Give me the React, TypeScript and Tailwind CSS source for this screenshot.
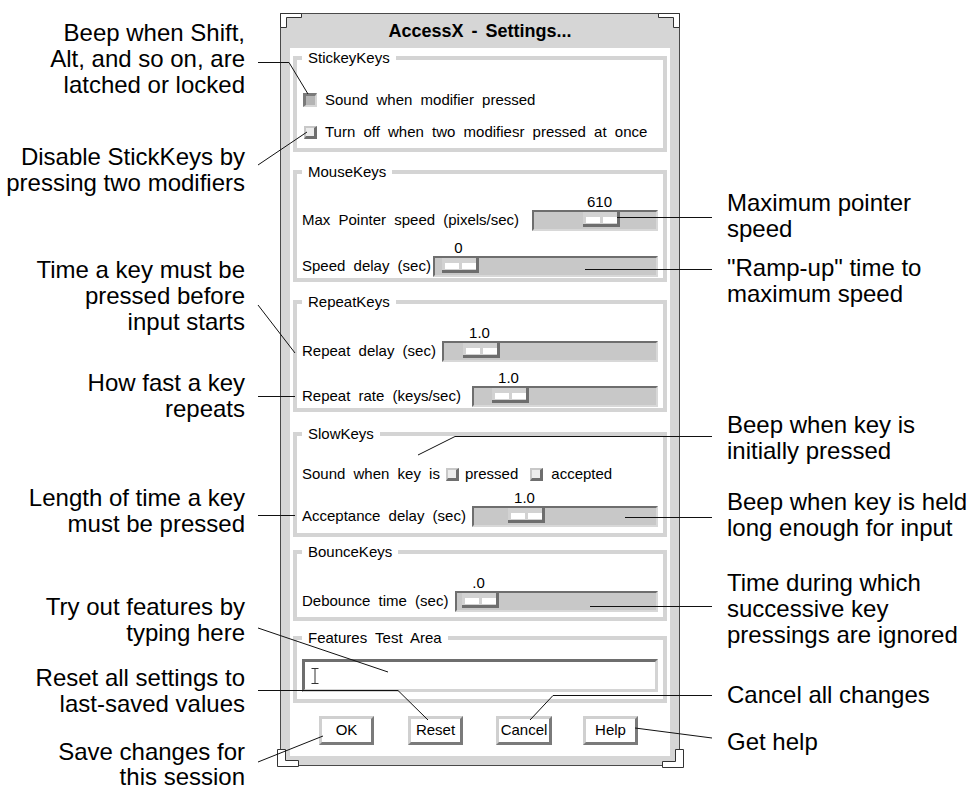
import React from "react";

function CheckOff() {
  return (
    <div className="w-[13px] h-[13px] shrink-0 bg-[#ececec] border-t-2 border-l-2 border-t-[#c8c8c8] border-l-[#c8c8c8] border-b-[3px] border-r-[3px] border-b-[#6e6e6e] border-r-[#6e6e6e]" />
  );
}

function CheckOn() {
  return (
    <div className="w-[14px] h-[14px] shrink-0 bg-[#b4b4b4] border-t-[3px] border-l-[3px] border-t-[#7a7a7a] border-l-[#7a7a7a] border-b-2 border-r-2 border-b-[#d6d6d6] border-r-[#d6d6d6]" />
  );
}

function Knob() {
  return (
    <div className="w-[37px] h-[15px] bg-[#d2d2d2] border-b-[3px] border-r-[3px] border-[#6e6e6e] flex pt-[5px] pl-[3px] gap-[3px]">
      <div className="w-[14px] h-[6px] bg-white" />
      <div className="w-[14px] h-[6px] bg-white" />
    </div>
  );
}

function Slider({
  label,
  labelW,
  offset,
  value,
  className = "",
}: {
  label: string;
  labelW: string;
  offset: string;
  value: string;
  className?: string;
}) {
  return (
    <div className={"flex items-end " + className}>
      <div className={"h-[21px] flex items-center whitespace-nowrap " + labelW}>{label}</div>
      <div className="flex-1 flex flex-col">
        <div className="h-[16px] leading-[16px] flex">
          <div className={"w-[37px] flex justify-center whitespace-nowrap " + offset}>{value}</div>
        </div>
        <div className="h-[21px] bg-[#c8c8c8] border-t-2 border-l-2 border-t-[#6e6e6e] border-l-[#6e6e6e] border-b-2 border-r-2 border-b-[#d8d8d8] border-r-[#d8d8d8] flex">
          <div className={offset}>
            <Knob />
          </div>
        </div>
      </div>
    </div>
  );
}

function Group({
  title,
  className = "",
  children,
}: {
  title: string;
  className?: string;
  children: React.ReactNode;
}) {
  return (
    <fieldset className={"border-4 border-[#d4d4d4] px-[5px] " + className}>
      <legend className="px-[6px] text-[15px] leading-[18px] whitespace-nowrap">{title}</legend>
      {children}
    </fieldset>
  );
}

function Btn({ label, className = "" }: { label: string; className?: string }) {
  return (
    <div
      className={
        "w-[55px] h-[29px] flex items-center justify-center bg-white border-t-[3px] border-l-[3px] border-t-[#d0d0d0] border-l-[#d0d0d0] border-b-[3px] border-r-[3px] border-b-[#7a7a7a] border-r-[#7a7a7a] " +
        className
      }
    >
      {label}
    </div>
  );
}

function Callout({ lines, className = "" }: { lines: string[]; className?: string }) {
  return (
    <div className={"whitespace-nowrap " + className}>
      {lines.map((l, i) => (
        <div key={i}>{l}</div>
      ))}
    </div>
  );
}

export default function App() {
  return (
    <div className="relative w-[969px] h-[790px] bg-white overflow-hidden text-black font-['Liberation_Sans',Arial,sans-serif]">
      <div className="flex items-start">
        {/* Left callouts */}
        <div className="w-[245px] shrink-0 text-right text-[24px] leading-[26px] flex flex-col">
          <Callout className="mt-[20px]" lines={["Beep when Shift,", "Alt, and so on, are", "latched or locked"]} />
          <Callout className="mt-[46px]" lines={["Disable StickKeys by", "pressing two modifiers"]} />
          <Callout className="mt-[61px]" lines={["Time a key must be", "pressed before", "input starts"]} />
          <Callout className="mt-[35px]" lines={["How fast a key", "repeats"]} />
          <Callout className="mt-[63px]" lines={["Length of time a key", "must be pressed"]} />
          <Callout className="mt-[57px]" lines={["Try out features by", "typing here"]} />
          <Callout className="mt-[19px]" lines={["Reset all settings to", "last-saved values"]} />
          <Callout className="mt-[22px] leading-[25px]" lines={["Save changes for", "this session"]} />
        </div>

        {/* Window */}
        <div className="relative ml-[35px] mt-[13px] w-[400px] h-[753px] shrink-0 border border-[#4a4a4a] bg-[#d6d6d6] flex flex-col px-[9px] pb-[9px] text-[15px] [word-spacing:4px]">
          <div className="h-[34px] shrink-0 flex items-center justify-center font-bold text-[18px] [word-spacing:3px] pt-[1px]">
            AccessX - Settings...
          </div>
          <div className="flex-1 bg-white px-[3px] pt-px flex flex-col">
            <Group title="StickeyKeys">
              <div className="mt-[23px] h-[20px] flex items-center">
                <div className="ml-[1px]">
                  <CheckOn />
                </div>
                <div className="ml-[8px] whitespace-nowrap">Sound when modifier pressed</div>
              </div>
              <div className="mt-[12px] mb-[6px] h-[20px] flex items-center">
                <div className="ml-[2px]">
                  <CheckOff />
                </div>
                <div className="ml-[8px] whitespace-nowrap">Turn off when two modifiesr pressed at once</div>
              </div>
            </Group>

            <Group title="MouseKeys" className="mt-[11px]">
              <Slider className="mt-[13px]" label="Max Pointer speed (pixels/sec)" labelW="w-[230px]" offset="ml-[49px]" value="610" />
              <Slider className="mt-[9px] mb-[1px]" label="Speed delay (sec)" labelW="w-[131px]" offset="ml-[7px]" value="0" />
            </Group>

            <Group title="RepeatKeys" className="mt-[11px]">
              <Slider className="mt-[14px]" label="Repeat delay (sec)" labelW="w-[140px]" offset="ml-[19px]" value="1.0" />
              <Slider className="mt-[8px] mb-[1px]" label="Repeat rate (keys/sec)" labelW="w-[170px]" offset="ml-[18px]" value="1.0" />
            </Group>

            <Group title="SlowKeys" className="mt-[13px]">
              <div className="mt-[21px] h-[20px] flex items-center whitespace-nowrap">
                <div>Sound when key is</div>
                <div className="ml-[6px]">
                  <CheckOff />
                </div>
                <div className="ml-[6px]">pressed</div>
                <div className="ml-[12px]">
                  <CheckOff />
                </div>
                <div className="ml-[8px]">accepted</div>
              </div>
              <Slider className="mt-[6px] mb-[6px]" label="Acceptance delay (sec)" labelW="w-[170px]" offset="ml-[34px]" value="1.0" />
            </Group>

            <Group title="BounceKeys" className="mt-[6px]">
              <Slider className="mt-[14px] mb-[5px]" label="Debounce time (sec)" labelW="w-[153px]" offset="ml-[5px]" value=".0" />
            </Group>

            <Group title="Features Test Area" className="mt-[8px]">
              <div className="mt-[12px] mb-[7px] h-[33px] bg-white border-t-[3px] border-l-[3px] border-t-[#6e6e6e] border-l-[#6e6e6e] border-b-[3px] border-r-[3px] border-b-[#d4d4d4] border-r-[#d4d4d4] flex items-center pl-[6px]">
                <svg width="8" height="16" viewBox="0 0 8 16" className="block">
                  <path d="M0.5 0.5 H7.5 M4 0.5 V15.5 M0.5 15.5 H7.5" stroke="#333" strokeWidth="1" fill="none" />
                </svg>
              </div>
            </Group>

            <div className="mt-[13px] flex">
              <Btn label="OK" className="ml-[26px]" />
              <Btn label="Reset" className="ml-[34px]" />
              <Btn label="Cancel" className="ml-[33px] w-[56px]" />
              <Btn label="Help" className="ml-[31px]" />
            </div>
          </div>

          {/* corner brackets */}
          <svg className="absolute -left-[1px] -top-[1px]" width="22" height="16" viewBox="0 0 22 16">
            <polygon points="0.5,0.5 21.5,0.5 21.5,4.5 6.5,4.5 6.5,14.5 0.5,14.5" fill="white" stroke="#333" strokeWidth="1" />
          </svg>
          <svg className="absolute -right-[1px] -top-[1px]" width="22" height="16" viewBox="0 0 22 16">
            <polygon points="21.5,0.5 0.5,0.5 0.5,4.5 15.5,4.5 15.5,14.5 21.5,14.5" fill="white" stroke="#333" strokeWidth="1" />
          </svg>
          <svg className="absolute -left-[4px] -bottom-[2px]" width="22" height="18" viewBox="0 0 22 18">
            <polygon points="0.5,0.5 8.5,0.5 8.5,11.5 21.5,11.5 21.5,17.5 0.5,17.5" fill="white" stroke="#333" strokeWidth="1" />
          </svg>
          <svg className="absolute -right-[5px] -bottom-[3px]" width="22" height="19" viewBox="0 0 22 19">
            <polygon points="21.5,0.5 13.5,0.5 13.5,12.5 0.5,12.5 0.5,18.5 21.5,18.5" fill="white" stroke="#333" strokeWidth="1" />
          </svg>
        </div>

        {/* Right callouts */}
        <div className="ml-[47px] text-[24px] leading-[26px] flex flex-col">
          <Callout className="mt-[190px]" lines={["Maximum pointer", "speed"]} />
          <Callout className="mt-[13px]" lines={['"Ramp-up" time to', "maximum speed"]} />
          <Callout className="mt-[105px]" lines={["Beep when key is", "initially pressed"]} />
          <Callout className="mt-[25px]" lines={["Beep when key is held", "long enough for input"]} />
          <Callout className="mt-[29px]" lines={["Time during which", "successive key", "pressings are ignored"]} />
          <Callout className="mt-[34px]" lines={["Cancel all changes"]} />
          <Callout className="mt-[21px]" lines={["Get help"]} />
        </div>
      </div>

      {/* leader lines */}
      <svg className="absolute left-0 top-0 pointer-events-none" width="969" height="790" viewBox="0 0 969 790">
        <g stroke="#111" strokeWidth="1" fill="none">
          <polyline points="258,62.5 289,62.5 308,94" />
          <line x1="258" y1="165" x2="307" y2="132" />
          <line x1="617" y1="217.5" x2="712" y2="217.5" />
          <line x1="585" y1="269.5" x2="712" y2="269.5" />
          <line x1="258" y1="305" x2="295" y2="353" />
          <line x1="258" y1="396.5" x2="295" y2="396.5" />
          <polyline points="418,455 455,436.5 712,436.5" />
          <line x1="258" y1="515.5" x2="295" y2="515.5" />
          <line x1="625" y1="517.5" x2="712" y2="517.5" />
          <line x1="590" y1="606.5" x2="712" y2="606.5" />
          <line x1="258" y1="628" x2="388" y2="672" />
          <polyline points="258,690.5 398,690.5 428,720" />
          <polyline points="530,720 553,695.5 712,695.5" />
          <line x1="635" y1="728" x2="712" y2="738" />
          <line x1="258" y1="762" x2="323" y2="736" />
        </g>
      </svg>
    </div>
  );
}
